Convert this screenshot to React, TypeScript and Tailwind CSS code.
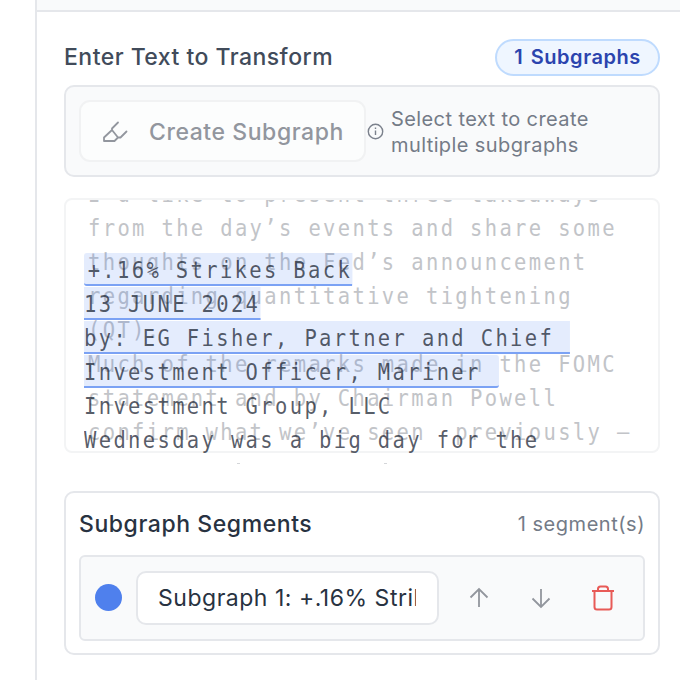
import React from "react";

const plain = [
  "I’d like to present three takeaways",
  "from the day’s events and share some",
  "thoughts on the Fed’s announcement",
  "regarding quantitative tightening",
  "(QT).",
  "Much of the remarks made in the FOMC",
  "statement and by Chairman Powell",
  "confirm what we’ve seen  previously —",
];

function Highlight({ children, className = "" }: { children: React.ReactNode; className?: string }) {
  return (
    <span className={`inline-block h-[33px] border-b-[2.5px] border-[#7ba2f4] bg-[#2f6cf0]/[0.13] leading-[34px] ${className}`}>
      {children}
    </span>
  );
}

export default function App() {
  return (
    <div className="flex h-[680px] w-[680px] overflow-hidden bg-white font-['Inter',sans-serif]">
      <div className="w-[35px] shrink-0" />
      <main className="flex min-w-0 flex-1 flex-col border-l-2 border-[#e5e7eb]">
        <div className="h-[12px] shrink-0 border-b-2 border-[#e5e7eb] bg-[#f9fafb]" />
        <div className="flex flex-col pr-5 pl-[27px] pt-[26px]">
          <header className="flex h-[38px] items-center justify-between">
            <h2 className="pt-px text-[23px] font-medium tracking-[0.47px] text-[#414b5a]">Enter Text to Transform</h2>
            <span className="flex h-[37px] w-[165px] items-center justify-center rounded-full border-2 border-[#bfdbfe] bg-[#eff6ff] text-[20px] font-semibold tracking-[0.55px] [word-spacing:2px] text-[#2b44ae]">
              1 Subgraphs
            </span>
          </header>

          <section className="mt-[9px] flex h-[92px] items-center rounded-[10px] border-2 border-[#e5e7eb] bg-[#f9fafb] pl-[13px]">
            <button className="flex h-[62px] w-[287px] shrink-0 items-center rounded-[11px] border-2 border-[#f1f2f3] bg-[#fcfdfd] pl-[20px] text-[#92969e]">
              <svg width="28" height="24" viewBox="0 0 28 24" fill="none" stroke="currentColor" strokeWidth="1.8" strokeLinejoin="round" strokeLinecap="round">
                <path d="M17 3.500 11 9.500V11L3 18.500V22H13.500L17 18.500H19.500L25.500 12.500M11 11l6 7.500" />
              </svg>
              <span className="ml-[20px] pt-[3px] whitespace-nowrap text-[23px] font-medium tracking-[0.56px]">Create Subgraph</span>
            </button>
            <svg className="ml-[1px] shrink-0" width="17" height="17" viewBox="0 0 17 17" fill="none" stroke="#7b818c" strokeWidth="1.4">
              <circle cx="8.5" cy="8.5" r="7.2" />
              <path d="M8.5 7.5v4.5M8.5 4.5v1.5" />
            </svg>
            <p className="ml-[7px] pt-px whitespace-nowrap text-[20px] leading-[26px] tracking-[0.4px] text-[#747b87]">
              Select text to create<br />multiple subgraphs
            </p>
          </section>

          <section className="relative mt-[21px] h-[255px] rounded-[8px] border-2 border-[#f3f4f5] font-['DejaVu_Sans_Mono',monospace] text-[22.5px] leading-[34px] tracking-[2.6px]">
            <div className="h-[251px] overflow-hidden pl-[22px] text-[#c2c4c8]">
              <div className="-mt-[23px] w-[569px] origin-left scale-x-[0.91]">
                {plain.map((line) => (
                  <div key={line} className="h-[34px] whitespace-pre">{line}</div>
                ))}
              </div>
            </div>
            <div className="absolute top-[53px] left-[18px] origin-left scale-x-[0.91] whitespace-pre text-[#1f2937]/[0.76]">
              <div className="h-[34px]"><Highlight className="rounded-l-[3px] pl-1">+.16% Strikes Back</Highlight></div>
              <div className="h-[34px]"><Highlight>13 JUNE 2024</Highlight></div>
              <div className="h-[34px]"><Highlight className="pr-px">{"by: EG Fisher, Partner and Chief "}</Highlight></div>
              <div className="h-[34px]"><Highlight className="rounded-r-[3px] pr-[4px]">{"Investment Officer, Mariner "}</Highlight></div>
              <div className="h-[34px]">Investment Group, LLC</div>
              <div className="h-[34px]">Wednesday was a big day for the</div>
            </div>
            <div className="absolute top-[263px] left-[171px] flex gap-[144px]">
              <span className="h-px w-[3px] bg-[#d4d6d9]" />
              <span className="h-px w-[3px] bg-[#d4d6d9]" />
            </div>
          </section>

          <section className="mt-[38px] flex h-[164px] flex-col rounded-[10px] border-2 border-[#e5e7eb] px-[13px]">
            <div className="flex h-[62px] items-center justify-between">
              <h3 className="pt-px text-[23px] font-medium tracking-[0.57px] text-[#283241]">Subgraph Segments</h3>
              <span className="text-[20px] tracking-[0.53px] text-[#747b87]">1 segment(s)</span>
            </div>
            <div className="flex h-[86px] items-center rounded-[6px] border-2 border-[#e5e7eb] bg-[#f9fafb] pl-[14px]">
              <span className="-mt-[2px] size-[27px] shrink-0 rounded-full bg-[#4f80ed]" />
              <div className="ml-[14px] flex h-[54px] w-[303px] shrink-0 items-center rounded-[10px] border-2 border-[#e5e7eb] bg-white pr-[21px] pl-[20px]">
                <div className="overflow-hidden pt-px whitespace-nowrap text-[23px] tracking-[0.52px] text-[#283241]">Subgraph 1: +.16% Strikes Back</div>
              </div>
              <svg className="ml-[29px] shrink-0" width="22" height="22" viewBox="0 0 22 22" fill="none" stroke="#92969d" strokeWidth="1.8">
                <path d="M11 20V2M2.5 10.5 11 2l8.5 8.5" />
              </svg>
              <svg className="ml-[40px] shrink-0" width="22" height="22" viewBox="0 0 22 22" fill="none" stroke="#92969d" strokeWidth="1.8">
                <path d="M11 2v18M2.5 11.5 11 20l8.5-8.5" />
              </svg>
              <svg className="ml-[38px] shrink-0" width="26" height="28" viewBox="0 0 26 28" fill="none" stroke="#e85a57" strokeWidth="2">
                <path d="M2 7h22M8 7V5q0-2.500 2.500-2.500h5Q18 2.500 18 5v2M4.500 7v16q0 2.500 2.500 2.500h12q2.500 0 2.500-2.500V7" />
              </svg>
            </div>
          </section>
        </div>
      </main>
    </div>
  );
}
